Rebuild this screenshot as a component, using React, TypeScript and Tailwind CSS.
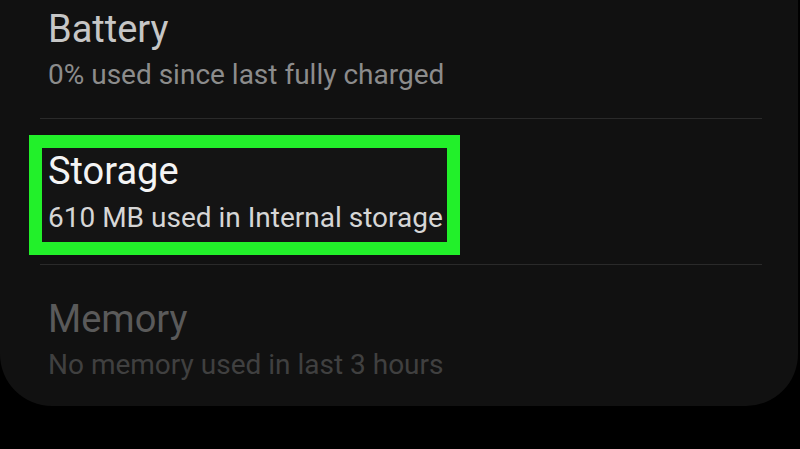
export default function App() {
  return (
    <div className="w-[800px] h-[449px] bg-black overflow-hidden" style={{ fontFamily: "Roboto, 'Noto Sans', sans-serif" }}>
      <div className="w-[798px] h-[406px] bg-[#111111] rounded-b-[52px] flex flex-col">
        <div className="h-[118px] pl-[48px] pt-[9px] flex flex-col">
          <div className="text-[38px] leading-[40px] text-[#c6c6c6]">Battery</div>
          <div className="mt-[5px] text-[28px] leading-[41px] text-[#8c8c8c]">0% used since last fully charged</div>
        </div>
        <div className="h-px bg-[#2a2a2a] ml-[40px] mr-[36px]" />
        <div className="relative h-[145px] pl-[48px] pt-[32px] flex flex-col">
          <div className="absolute left-[29px] top-[16px] w-[431px] h-[120px] border-[13px] border-[#22f02a] bg-[#141414]" />
          <div className="relative text-[38px] leading-[40px] text-[#f4f4f4]">Storage</div>
          <div className="relative mt-[6px] text-[28px] leading-[41px] text-[#d6d6d6]">610 MB used in Internal storage</div>
        </div>
        <div className="h-px bg-[#2a2a2a] ml-[40px] mr-[36px]" />
        <div className="h-[141px] pl-[48px] pt-[34px] flex flex-col">
          <div className="text-[38px] leading-[40px] text-[#5a5a5a]">Memory</div>
          <div className="mt-[5px] text-[28px] leading-[41px] text-[#404040]">No memory used in last 3 hours</div>
        </div>
      </div>
    </div>
  );
}
